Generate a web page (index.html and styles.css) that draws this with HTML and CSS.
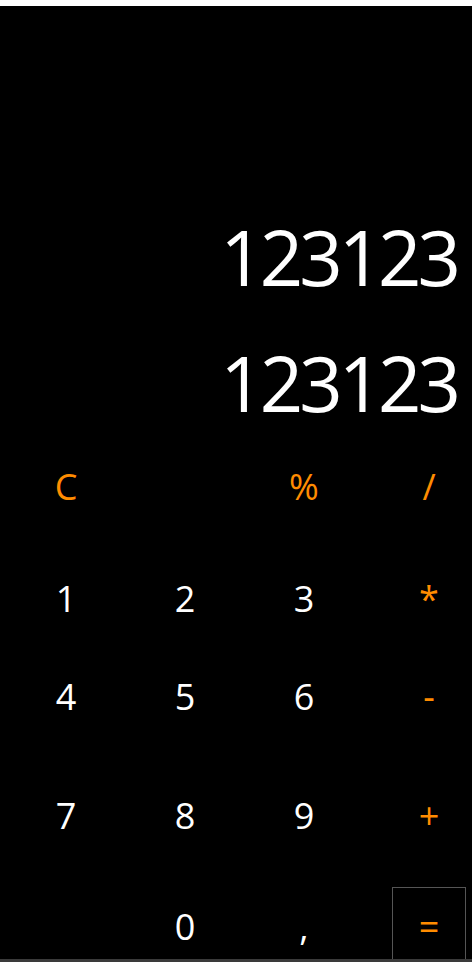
FILE: index.html
```html
<!DOCTYPE html>
<html lang="en">
<head>
<meta charset="utf-8">
<title>Calculator</title>
<link rel="stylesheet" href="styles.css">
</head>
<body>
<div class="app">
  <div class="topbar"></div>
  <div class="display">
    <div class="line">123123</div>
    <div class="line">123123</div>
  </div>
  <div class="keys">
    <div class="key op">C</div>
    <div class="key"></div>
    <div class="key op">%</div>
    <div class="key op">/</div>

    <div class="key">1</div>
    <div class="key">2</div>
    <div class="key">3</div>
    <div class="key op">*</div>

    <div class="key">4</div>
    <div class="key">5</div>
    <div class="key">6</div>
    <div class="key op">-</div>

    <div class="key">7</div>
    <div class="key">8</div>
    <div class="key">9</div>
    <div class="key op">+</div>

    <div class="key"></div>
    <div class="key">0</div>
    <div class="key">,</div>
    <div class="key op equals">=</div>
  </div>
  <div class="bottombar"></div>
</div>
</body>
</html>
```

FILE: styles.css
```css
html, body {
  margin: 0;
  padding: 0;
  background: #000;
  overflow: hidden;
}

.app {
  width: 472px;
  height: 962px;
  display: flex;
  flex-direction: column;
  font-family: "Open Sans", "Noto Sans", sans-serif;
  color: #fff;
}

.topbar {
  height: 6px;
  background: #fff;
  flex: none;
}

.display {
  height: 418px;
  flex: none;
  display: flex;
  flex-direction: column;
  justify-content: flex-end;
  align-items: flex-end;
  gap: 44px;
  padding-right: 15px;
}

.line {
  font-size: 76px;
  line-height: 82px;
  letter-spacing: -4px;
}

.keys {
  flex: none;
  display: grid;
  grid-template-columns: 119px 119px 125px 74px;
  grid-template-rows: 118px 106px 90px 149px 72px;
  padding-left: 29px;
  justify-items: start;
  align-items: center;
}

.key {
  width: 74px;
  height: 100%;
  display: flex;
  align-items: center;
  justify-content: center;
  padding-top: 6px;
  font-size: 36px;
  color: #fff;
  box-sizing: border-box;
}

.key.op {
  color: #ff8c00;
}

.key.equals {
  border: 1px solid #555;
  border-bottom: none;
}

.bottombar {
  height: 3px;
  background: #3a3a3a;
  flex: none;
}
```
